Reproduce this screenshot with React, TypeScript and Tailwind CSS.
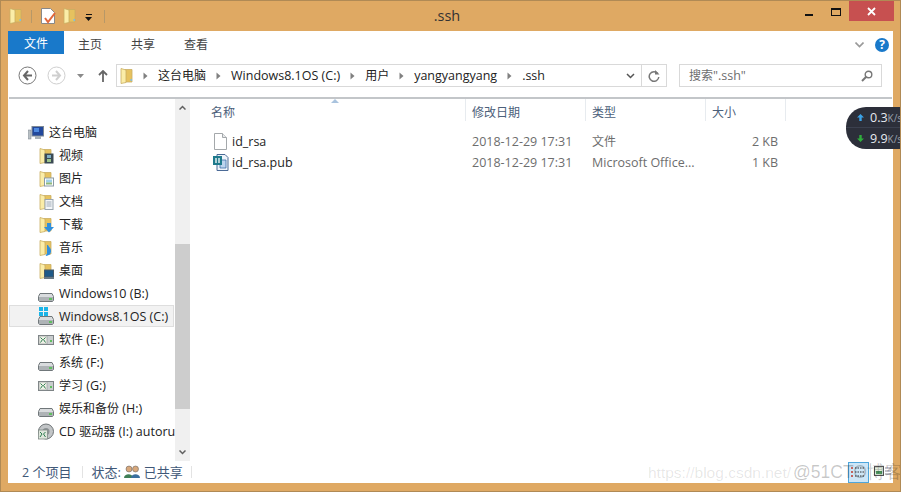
import React from "react";

const font = { fontFamily: '"Open Sans","Noto Sans CJK SC",sans-serif' };

function T({ s }: { s: string }) {
  return (
    <span className="whitespace-pre">
      {s.split(/([\u4e00-\u9fff]+)/).map((p, i) =>
        /[\u4e00-\u9fff]/.test(p) ? (
          <span key={i} className="text-[12px]">
            {p}
          </span>
        ) : (
          <span key={i}>{p}</span>
        ),
      )}
    </span>
  );
}

function Folder({ className = "" }: { className?: string }) {
  return (
    <svg width="13" height="16" viewBox="0 0 13 16" className={className}>
      <path d="M5 1.500h7v12.500h-7z" fill="#e6c25f" stroke="#c9ad62" strokeWidth="0.8" />
      <path d="M1 .500l5 1.500v12.500l-5 1z" fill="#fbeda8" stroke="#c9ad62" strokeWidth="0.8" />
      <rect x="10.500" y="11" width="1.500" height="2" fill="#7fbfe0" />
    </svg>
  );
}

function LibFolder({ kind }: { kind: string }) {
  return (
    <span className="relative w-[15px] h-[16px] shrink-0 ml-[1px]">
      <Folder className="absolute left-0 top-0" />
      <svg width="10" height="11" viewBox="0 0 10 11" className="absolute left-[5px] top-[5px]">
        {kind === "video" && (
          <>
            <rect x="0.500" y="0.500" width="9" height="10" fill="#3b4a54" />
            <rect x="3" y="2" width="4" height="3" fill="#7fb0c8" />
            <rect x="3" y="6" width="4" height="3" fill="#9cc48a" />
          </>
        )}
        {kind === "pic" && (
          <>
            <rect x="0.500" y="2" width="9" height="8" fill="#fff" stroke="#8a9aa6" />
            <rect x="2" y="3.500" width="6" height="3" fill="#9fd0e8" />
            <rect x="2" y="6.500" width="6" height="2" fill="#8fb87a" />
          </>
        )}
        {kind === "doc" && (
          <>
            <rect x="1" y="0.500" width="8" height="10" fill="#f4f6f8" stroke="#9aa6b0" />
            <path d="M2.500 3h5M2.500 5h5M2.500 7h5" stroke="#8a9aa6" strokeWidth="0.8" />
          </>
        )}
        {kind === "down" && <path d="M3 1h4v4h3l-5 5.500-5-5.500h3z" fill="#2f8fdc" />}
        {kind === "music" && <path d="M3 0l1 0c.5 2 3.500 3 3 6.500l-1 3-3.500 1.500-1-1 1.500-1z" fill="#2f8fdc" />}
        {kind === "desk" && (
          <>
            <rect x="0.500" y="2" width="9" height="7" fill="#1f5a88" stroke="#4a5a66" />
            <rect x="0" y="9" width="10" height="2" fill="#6a7a86" />
          </>
        )}
      </svg>
    </span>
  );
}

function Drive({ kind }: { kind: string }) {
  if (kind === "cd") {
    return (
      <svg width="16" height="17" viewBox="0 0 16 17" className="shrink-0">
        <circle cx="8" cy="8.500" r="7.500" fill="#c2c5c7" stroke="#6f7477" />
        <circle cx="8" cy="8.500" r="3.500" fill="#8d9194" />
        <rect x="0.500" y="7" width="9" height="9" fill="#dfe6dc" stroke="#7f8a86" strokeWidth="0.8" />
        <path d="M2 9l2 2-2 3M7.500 9l-2 2 2 3" stroke="#2e7d4f" strokeWidth="1" fill="none" />
      </svg>
    );
  }
  if (kind === "net") {
    return (
      <svg width="16" height="13" viewBox="0 0 16 13" className="shrink-0 mt-[2px]">
        <rect x="0.500" y="1.500" width="15" height="9" fill="#c9cdce" stroke="#7d8385" />
        <rect x="1" y="2" width="8" height="8" fill="#eef0e6" stroke="#8c9296" strokeWidth="0.6" />
        <path d="M2.500 3.500l2 2-2 3M7.500 3.500l-2 2 2 3" stroke="#2e7d4f" strokeWidth="1" fill="none" />
        <rect x="12" y="6" width="2" height="2" fill="#5fbf5f" />
      </svg>
    );
  }
  return (
    <span className="relative w-[16px] h-[17px] shrink-0">
      {kind === "win" && (
        <svg width="9" height="9" viewBox="0 0 9 9" className="absolute left-[1px] top-[-1px]">
          <path d="M0 0h4v4H0zM5 0h4v4H5zM0 5h4v4H0zM5 5h4v4H5z" fill="#19b4e8" />
        </svg>
      )}
      <svg width="16" height="9" viewBox="0 0 16 9" className="absolute left-0 bottom-0">
        <path d="M2 .500h12l1.500 3v4l-1 1h-13l-1-1v-4z" fill="#d9dcde" stroke="#70777a" />
        <rect x="1" y="4" width="14" height="4" fill="#aeb3b6" />
        <rect x="11" y="5" width="3" height="2" fill="#5fbf5f" />
      </svg>
    </span>
  );
}

function NavIcon({ kind }: { kind: string }) {
  if (kind === "pc") {
    return (
      <svg width="16" height="14" viewBox="0 0 16 14" className="shrink-0">
        <rect x="0" y="4" width="3" height="9" fill="#b9c0c4" stroke="#77808a" strokeWidth="0.5" />
        <rect x="4" y="0.500" width="11.500" height="9.500" fill="#22489c" stroke="#7d8894" />
        <rect x="6" y="2" width="5" height="4" fill="#4f8ae0" />
        <rect x="7" y="10" width="6" height="3" fill="#a8b0b6" />
      </svg>
    );
  }
  if (["video", "pic", "doc", "down", "music", "desk"].includes(kind)) return <LibFolder kind={kind} />;
  return <Drive kind={kind} />;
}

const navItems: { icon: string; label: string; selected?: boolean }[] = [
  { icon: "video", label: "视频" },
  { icon: "pic", label: "图片" },
  { icon: "doc", label: "文档" },
  { icon: "down", label: "下载" },
  { icon: "music", label: "音乐" },
  { icon: "desk", label: "桌面" },
  { icon: "hdd", label: "Windows10 (B:)" },
  { icon: "win", label: "Windows8.1OS (C:)", selected: true },
  { icon: "net", label: "软件 (E:)" },
  { icon: "hdd", label: "系统 (F:)" },
  { icon: "net", label: "学习 (G:)" },
  { icon: "hdd", label: "娱乐和备份 (H:)" },
  { icon: "cd", label: "CD 驱动器 (I:) autorun" },
];

function Crumb({ label }: { label: string }) {
  return (
    <>
      <svg width="5" height="8" viewBox="0 0 5 8" className="shrink-0">
        <path d="M0.500 0.500l4 3.500-4 3.500z" fill="#808080" />
      </svg>
      <T s={label} />
    </>
  );
}

function Col({ w, label, arrow }: { w: string; label: string; arrow?: boolean }) {
  return (
    <div className={`${w} relative h-[22px] pt-[5px] border-r border-[#e7ebef] text-[#4c607a] shrink-0`}>
      <T s={label} />
      {arrow && (
        <svg width="8" height="4" viewBox="0 0 8 4" className="absolute left-[127px] top-0">
          <path d="M0 4l4-4 4 4z" fill="#a9c3de" />
        </svg>
      )}
    </div>
  );
}

function FileRow({ name, type, size, pub }: { name: string; type: string; size: string; pub?: boolean }) {
  return (
    <div className="flex h-[21px] items-center">
      <div className="w-[260px] flex items-center shrink-0 gap-[3px] text-[#1e1e1e]">
        <span className="w-[17px] flex justify-center shrink-0">
          {pub ? (
            <svg width="16" height="17" viewBox="0 0 16 17">
              <path d="M4 .500h8l3 3v13H4z" fill="#eef3fa" stroke="#4b6a96" />
              <path d="M7 6h6v8H7z" fill="#bcd4ee" stroke="#3f6ea8" strokeWidth="0.8" />
              <rect x="0" y="2" width="9" height="9" fill="#1f7a8c" />
              <path d="M3 4v5M6 4v5" stroke="#fff" strokeWidth="1.300" />
            </svg>
          ) : (
            <svg width="13" height="17" viewBox="0 0 13 17">
              <path d="M.500 .500h8l4 4v12H.500z" fill="#fff" stroke="#a4a8ab" />
              <path d="M8.500 .500v4h4" fill="#e8eaec" stroke="#a4a8ab" />
            </svg>
          )}
        </span>
        {name}
      </div>
      <div className="w-[120px] text-[#6d6d6d] shrink-0">2018-12-29 17:31</div>
      <div className="w-[120px] text-[#6d6d6d] shrink-0 truncate pr-[9px]">
        <T s={type} />
      </div>
      <div className="w-[66px] text-[#6d6d6d] text-right shrink-0">{size}</div>
    </div>
  );
}

export default function App() {
  return (
    <div
      className="relative w-[901px] h-[492px] overflow-hidden bg-[#dfa963] border border-[#b08a55] flex flex-col text-[12.500px] leading-[17px]"
      style={font}
    >
      {/* Title bar */}
      <div className="relative h-[30px] shrink-0 flex items-start pl-[8px] pt-[7px]">
        <Folder />
        <span className="w-px h-[13px] bg-[#b79868] ml-[9px] mt-[2px]" />
        <svg width="16" height="17" viewBox="0 0 16 17" className="ml-[9px]">
          <path d="M.500 .500h9l4 4v11H.500z" fill="#fff" stroke="#888" />
          <path d="M4 10l3 4 7-9" fill="none" stroke="#e2683c" strokeWidth="2" />
        </svg>
        <Folder className="ml-[6px]" />
        <svg width="8" height="7" viewBox="0 0 8 7" className="ml-[9px] mt-[6px]">
          <path d="M1 0h6v1H1zM0 3h7L3.500 7z" fill="#111" />
        </svg>
        <span className="w-px h-[13px] bg-[#b79868] ml-[11px] mt-[2px]" />
        <span className="absolute left-0 right-[7px] top-[6px] text-center text-[14.500px] text-[#333]">.ssh</span>
        <div className="ml-auto flex items-start mr-[6px] -mt-[7px] relative">
          <span className="w-[8px] h-[2px] bg-[#111] mt-[13px] mr-[18px]" />
          <span className="w-[8px] h-[5px] border border-[#111] border-t-[2px] mt-[7px] mr-[8px] box-content" />
          <span className="w-[45px] h-[20px] bg-[#c75050] flex items-center justify-center">
            <svg width="9" height="9" viewBox="0 0 9 9">
              <path d="M1 1l7 7M8 1l-7 7" stroke="#fff" strokeWidth="1.800" />
            </svg>
          </span>
        </div>
      </div>

      {/* Content */}
      <div className="flex-1 min-h-0 ml-[7px] mr-[7px] mb-[8px] bg-white flex flex-col">
        {/* Ribbon tabs */}
        <div className="h-[27px] flex items-start shrink-0">
          <div className="w-[56px] h-[23px] bg-[#1979ca] text-white flex items-center justify-center pt-[1px]">
            <T s="文件" />
          </div>
          <div className="ml-[14px] w-[24px] h-[23px] flex items-center pt-[4px] text-[#444]">
            <T s="主页" />
          </div>
          <div className="ml-[29px] w-[24px] h-[23px] flex items-center pt-[4px] text-[#444]">
            <T s="共享" />
          </div>
          <div className="ml-[29px] w-[24px] h-[23px] flex items-center pt-[4px] text-[#444]">
            <T s="查看" />
          </div>
          <div className="ml-auto flex items-center h-[27px] mr-[4px]">
            <svg width="9" height="6" viewBox="0 0 9 6" className="mr-[11px]">
              <path d="M.500 .500l4 4 4-4" fill="none" stroke="#9a9a9a" strokeWidth="1.600" />
            </svg>
            <span className="w-[14px] h-[14px] rounded-full bg-[#1979ca] text-white font-bold flex items-center justify-center text-[12px]">?</span>
          </div>
        </div>

        {/* Address row */}
        <div className="h-[41px] mx-[1px] flex items-center shrink-0 border-b-[2px] border-[#c3c6c9] pl-[9px] pr-[10px] pb-[4px]">
          <svg width="19" height="19" viewBox="0 0 19 19" className="shrink-0">
            <circle cx="9.500" cy="9.500" r="8.500" fill="#fff" stroke="#777" />
            <path d="M10 5l-4 4.500 4 4.500M6 9.500h8" fill="none" stroke="#666" strokeWidth="2" />
          </svg>
          <svg width="19" height="19" viewBox="0 0 19 19" className="ml-[10px] shrink-0">
            <circle cx="9.500" cy="9.500" r="8.500" fill="#fff" stroke="#cfcfcf" />
            <path d="M9 5l4 4.500-4 4.500M13 9.500H5" fill="none" stroke="#cfcfcf" strokeWidth="2" />
          </svg>
          <svg width="7" height="4" viewBox="0 0 7 4" className="ml-[11px] shrink-0">
            <path d="M0 0h7L3.500 4z" fill="#8a8a8a" />
          </svg>
          <svg width="10" height="12" viewBox="0 0 10 12" className="ml-[14px] shrink-0">
            <path d="M5 1v11M1 5l4-4 4 4" fill="none" stroke="#666" strokeWidth="1.800" />
          </svg>
          <div className="ml-[8px] w-[551px] h-[23px] border border-[#d9d9d9] flex items-center shrink-0 text-[#222]">
            <Folder className="ml-[3px] mr-[10px]" />
            <div className="flex items-center gap-[10px] flex-1">
              <Crumb label="这台电脑" />
              <Crumb label="Windows8.1OS (C:)" />
              <Crumb label="用户" />
              <Crumb label="yangyangyang" />
              <Crumb label=".ssh" />
            </div>
            <svg width="9" height="6" viewBox="0 0 9 6" className="mr-[6px]">
              <path d="M1 1l3.500 3.500L8 1" fill="none" stroke="#555" strokeWidth="1.500" />
            </svg>
            <div className="w-[25px] h-[21px] border-l border-[#d9d9d9] flex items-center justify-center">
              <svg width="12" height="12" viewBox="0 0 12 12">
                <path d="M9.800 3.500A4.800 4.800 0 1 0 10.800 7" fill="none" stroke="#777" strokeWidth="1.500" />
                <path d="M7 0v4.500h4.500z" fill="#777" />
              </svg>
            </div>
          </div>
          <div className="ml-[12px] flex-1 h-[23px] border border-[#d9d9d9] flex items-center justify-between pl-[9px] pr-[8px] text-[#6d6d6d]">
            <T s={'搜索".ssh"'} />
            <svg width="12" height="12" viewBox="0 0 12 12">
              <circle cx="7.500" cy="4.500" r="3.300" fill="none" stroke="#777" strokeWidth="1.400" />
              <path d="M5 7l-4 4" stroke="#777" strokeWidth="2" />
            </svg>
          </div>
        </div>

        {/* Main */}
        <div className="flex-1 min-h-0 flex">
          <div className="w-[167px] shrink-0 pt-[22px] overflow-hidden">
            <div className="h-[23px] flex items-center pl-[20px] gap-[5px] text-[#222] whitespace-nowrap">
              <NavIcon kind="pc" />
              <T s="这台电脑" />
            </div>
            {navItems.map((it) => (
              <div
                key={it.label}
                className={`flex items-center gap-[5px] text-[#222] whitespace-nowrap ${it.selected ? "h-[22px] mb-[1px] ml-[1px] mr-[1px] pl-[28px] bg-[#f2f2f2] border border-[#dedede]" : "h-[23px] pl-[30px]"}`}
              >
                <NavIcon kind={it.icon} />
                <T s={it.label} />
              </div>
            ))}
          </div>
          <div className="w-[15px] shrink-0 bg-[#f0f0f0] flex flex-col items-center">
            <svg width="7" height="5" viewBox="0 0 7 5" className="mt-[6px]">
              <path d="M.500 4.500l3-3 3 3" fill="none" stroke="#606060" strokeWidth="1.500" />
            </svg>
            <div className="w-full h-[165px] bg-[#cdcdcd] mt-[134px]" />
            <svg width="7" height="5" viewBox="0 0 7 5" className="mt-[41px]">
              <path d="M.500 .500l3 3 3-3" fill="none" stroke="#606060" strokeWidth="1.500" />
            </svg>
          </div>
          <div className="flex-1 pl-[14px]">
            <div className="flex">
              <Col w="w-[262px] pl-[7px]" label="名称" arrow />
              <Col w="w-[120px] pl-[6px]" label="修改日期" />
              <Col w="w-[120px] pl-[6px]" label="类型" />
              <Col w="w-[80px] pl-[6px]" label="大小" />
            </div>
            <div className="pt-[10px] pl-[8px]">
              <FileRow name="id_rsa" type="文件" size="2 KB" />
              <FileRow name="id_rsa.pub" type="Microsoft Office..." size="1 KB" pub />
            </div>
          </div>
        </div>

        {/* Status */}
        <div className="h-[22px] shrink-0 flex items-center pl-[14px] text-[#3f5878]">
          <span>
            2 <span className="text-[13px]">个项目</span>
          </span>
          <span className="w-px h-[12px] bg-[#e3e3e3] ml-[11px]" />
          <span className="ml-[8px] text-[13px]">状态:</span>
          <svg width="16" height="14" viewBox="0 0 16 14" className="ml-[3px]">
            <circle cx="5" cy="4" r="3" fill="#d8a87c" stroke="#555" strokeWidth="0.5" />
            <circle cx="11.500" cy="4" r="3" fill="#d8a87c" stroke="#555" strokeWidth="0.5" />
            <path d="M0 13c0-5 9-5 9 0z" fill="#3f7f56" />
            <path d="M7 13c0-5 9-5 9 0z" fill="#3a6f9e" />
          </svg>
          <span className="ml-[4px] text-[13px]">已共享</span>
          <span className="w-px h-[12px] bg-[#e3e3e3] ml-[8px]" />
          <div className="ml-auto mr-[2px] flex items-center">
            <div className="w-[21px] h-[21px] bg-[#cde6f7] border border-[#4ea6dc] flex items-center justify-center">
              <svg width="15" height="12" viewBox="0 0 15 12">
                <path d="M4 2h10M4 6h10M4 10h10" stroke="#333" strokeWidth="1" strokeDasharray="1.500 1" />
                <path d="M0 2h2M0 6h2M0 10h2" stroke="#c0392b" strokeWidth="1.500" />
              </svg>
            </div>
            <svg width="17" height="12" viewBox="0 0 17 12" className="ml-[5px]">
              <rect x="0.500" y="0.500" width="9" height="9" fill="#e6f0e0" stroke="#555" />
              <path d="M2 5h6v3H2z" fill="#4f9a63" />
              <path d="M11 2h6M11 5h6M11 8h6" stroke="#889" strokeWidth="1" />
            </svg>
          </div>
        </div>
      </div>

      {/* Network speed widget */}
      <div className="absolute left-[845px] top-[106px] w-[60px] h-[42px] rounded-l-[20px] bg-[#2c2f3a] text-[12.500px] text-[#e6eaf0]">
        <div className="h-[21px] flex items-center pl-[11px] gap-[6px] pt-[1px] border-b border-[#3b404e]">
          <svg width="7" height="7" viewBox="0 0 7 7">
            <path d="M3.500 0L7 3.500H4.700V7H2.300V3.500H0z" fill="#3ba3e8" />
          </svg>
          <span>
            0.3<span className="text-[10px] text-[#9aa0ac]">K/s</span>
          </span>
        </div>
        <div className="h-[21px] flex items-center pl-[11px] gap-[6px]">
          <svg width="7" height="7" viewBox="0 0 7 7">
            <path d="M3.500 7L7 3.500H4.700V0H2.300V3.500H0z" fill="#2fae3c" />
          </svg>
          <span>
            9.9<span className="text-[10px] text-[#9aa0ac]">K/s</span>
          </span>
        </div>
      </div>

      {/* Watermark */}
      <div
        className="absolute left-[647px] top-[463px] whitespace-nowrap text-[15.500px] text-[#0000001a]"
        style={{ fontFamily: '"Liberation Sans",sans-serif' }}
      >
        https://blog.csdn.net/
        <span className="ml-[2px] text-[17.500px] text-[#00000038]">@51CTO博客</span>
      </div>
    </div>
  );
}
